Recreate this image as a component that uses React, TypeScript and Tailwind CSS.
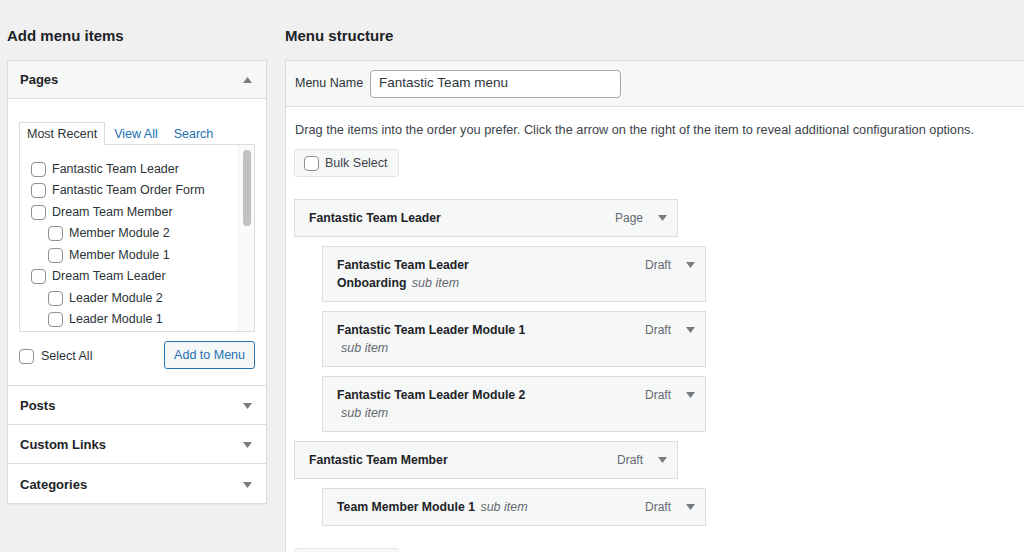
import React from "react";

const font = { fontFamily: '"Liberation Sans", Arial, sans-serif' };

function Down({ className = "" }: { className?: string }) {
  return (
    <svg width="9" height="6" viewBox="0 0 9 6" className={className}>
      <path d="M0 0 L9 0 L4.5 6 Z" fill="#787c82" />
    </svg>
  );
}
function Up() {
  return (
    <svg width="9" height="6" viewBox="0 0 9 6">
      <path d="M0 6 L9 6 L4.5 0 Z" fill="#787c82" />
    </svg>
  );
}

function Box() {
  return <span className="inline-block w-[15px] h-[15px] rounded-[4px] border border-[#8c8f94] bg-white shrink-0" />;
}

const pages: [string, boolean][] = [
  ["Fantastic Team Leader", false],
  ["Fantastic Team Order Form", false],
  ["Dream Team Member", false],
  ["Member Module 2", true],
  ["Member Module 1", true],
  ["Dream Team Leader", false],
  ["Leader Module 2", true],
  ["Leader Module 1", true],
];

function Item({
  children,
  status,
  sub,
}: {
  children: React.ReactNode;
  status: string;
  sub?: boolean;
}) {
  return (
    <div
      className={`${sub ? "ml-[28px]" : ""} w-[384px] bg-[#f6f7f7] border border-[#dcdcde] pl-[14px] pr-[10px] pt-[9px] pb-[9px] flex items-start`}
    >
      <div className="flex-1 text-[12.25px] leading-[18px] text-[#1d2327]">{children}</div>
      <div className="flex items-center h-[18px] text-[12px] text-[#646970]">
        <span>{status}</span>
        <Down className="ml-[15px]" />
      </div>
    </div>
  );
}

const Sub = ({ className = "" }: { className?: string }) => (
  <span className={`italic font-normal text-[#646970] text-[12.5px] ${className}`}>sub item</span>
);

export default function App() {
  return (
    <div style={font} className="w-[1024px] h-[552px] overflow-hidden bg-[#f0f0f1] flex pl-[7px] text-[#2c3338]">
      {/* left column */}
      <div className="w-[260px] shrink-0">
        <h2 className="pt-[25px] pb-[14px] leading-[21px] text-[15px] font-bold text-[#1d2327]">Add menu items</h2>
        <div className="bg-white border border-[#dcdcde] shadow-[0_1px_1px_rgba(0,0,0,0.04)]">
          <div className="h-[38px] bg-[#f6f7f7] border-b border-[#dcdcde] flex items-center justify-between pl-[12px] pr-[14px]">
            <span className="text-[13px] font-bold text-[#1d2327]">Pages</span>
            <Up />
          </div>
          <div className="px-[11px] pt-[22px] pb-[16px] border-b border-[#dcdcde]">
            <div className="flex items-end text-[12.5px]">
              <div className="h-[23px] px-[7px] border border-[#dcdcde] border-b-0 bg-white flex items-center text-[#2c3338] relative top-px z-10">
                Most Recent
              </div>
              <div className="h-[23px] ml-[2px] px-[7px] pt-[4px] flex items-center text-[#2271b1]">View All</div>
              <div className="h-[23px] ml-[2px] px-[7px] pt-[4px] flex items-center text-[#2271b1]">Search</div>
            </div>
            <div className="h-[188px] border border-[#dcdcde] flex">
              <div className="flex-1 pl-[11px] pt-[16px] flex flex-col gap-[5.5px]">
                {pages.map(([t, nested]) => (
                  <div key={t} className={`flex items-center gap-[6px] h-4 text-[12.5px] ${nested ? "pl-[17px]" : ""}`}>
                    <Box />
                    <span>{t}</span>
                  </div>
                ))}
              </div>
              <div className="w-[16px] border-l border-[#f0f0f1] bg-[#fafafa] pt-[5px] flex justify-center">
                <div className="w-[8px] h-[76px] rounded-full bg-[#c1c1c1]" />
              </div>
            </div>
            <div className="mt-[9px] flex items-center justify-between">
              <div className="flex items-center gap-[7px] text-[12.5px] pt-[2px]">
                <Box />
                <span>Select All</span>
              </div>
              <div className="h-[28px] px-[9px] border border-[#2271b1] rounded-[3px] bg-[#f6f7f7] text-[#2271b1] text-[12.5px] flex items-center">
                Add to Menu
              </div>
            </div>
          </div>
          {["Posts", "Custom Links", "Categories"].map((t, i) => (
            <div
              key={t}
              className={`h-[39px] pt-[2px] flex items-center justify-between pl-[12px] pr-[14px] ${i < 2 ? "border-b border-[#dcdcde]" : ""}`}
            >
              <span className="text-[13px] font-bold text-[#1d2327]">{t}</span>
              <Down />
            </div>
          ))}
        </div>
      </div>

      {/* right column */}
      <div className="flex-1 ml-[18px] min-w-0">
        <h2 className="pt-[25px] pb-[14px] leading-[21px] text-[15px] font-bold text-[#1d2327]">Menu structure</h2>
        <div className="bg-white border-l border-t border-[#dcdcde] w-[760px]">
          <div className="h-[46px] bg-[#f6f7f7] border-b border-[#dcdcde] flex items-center pl-[9px]">
            <span className="text-[12.5px] text-[#2c3338]">Menu Name</span>
            <div className="ml-[7px] w-[251px] h-[28px] bg-white border border-[#a7aaad] rounded-[4px] flex items-center pl-[8px] text-[13.5px] text-[#2c3338]">
              Fantastic Team menu
            </div>
          </div>
          <div className="pl-[8px] pt-[14px]">
            <p className="text-[12.75px] leading-[18px] text-[#3c434a] pl-px">
              Drag the items into the order you prefer. Click the arrow on the right of the item to reveal additional configuration options.
            </p>
            <div className="mt-[10px] w-[105px] h-[28px] bg-[#f6f7f7] border border-[#e3e4e5] rounded-[3px] flex items-center pl-[9px] gap-[6px] text-[12.5px] text-[#3c434a]">
              <Box />
              <span>Bulk Select</span>
            </div>
            <div className="mt-[22px] flex flex-col gap-[9px]">
              <Item status="Page">
                <span className="font-bold">Fantastic Team Leader</span>
              </Item>
              <Item status="Draft" sub>
                <div className="font-bold">Fantastic Team Leader</div>
                <div>
                  <span className="font-bold">Onboarding</span> <Sub className="ml-[2px]" />
                </div>
              </Item>
              <Item status="Draft" sub>
                <div className="font-bold">Fantastic Team Leader Module 1</div>
                <div className="pl-[4px]">
                  <Sub />
                </div>
              </Item>
              <Item status="Draft" sub>
                <div className="font-bold">Fantastic Team Leader Module 2</div>
                <div className="pl-[4px]">
                  <Sub />
                </div>
              </Item>
              <Item status="Draft">
                <span className="font-bold">Fantastic Team Member</span>
              </Item>
              <Item status="Draft" sub>
                <span className="font-bold">Team Member Module 1</span> <Sub className="ml-[2px]" />
              </Item>
            </div>
            <div className="mt-[22px] w-[105px] h-[28px] bg-[#f6f7f7] border border-[#e3e4e5] rounded-[3px]" />
          </div>
        </div>
      </div>
    </div>
  );
}
